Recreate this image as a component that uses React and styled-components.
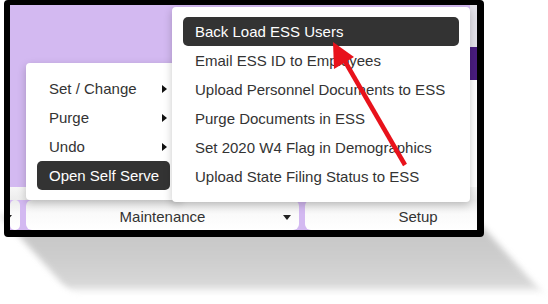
import React from "react";
import styled, { createGlobalStyle } from "styled-components";

const GlobalStyle = createGlobalStyle`
  html, body {
    margin: 0;
    background: #fff;
    font-family: "Liberation Sans", Arial, sans-serif;
  }
`;

const mainItems = [
  { label: "Set / Change", sub: true },
  { label: "Purge", sub: true },
  { label: "Undo", sub: true },
  { label: "Open Self Serve", active: true },
];

const essItems = [
  { label: "Back Load ESS Users", active: true },
  { label: "Email ESS ID to Employees" },
  { label: "Upload Personnel Documents to ESS" },
  { label: "Purge Documents in ESS" },
  { label: "Set 2020 W4 Flag in Demographics" },
  { label: "Upload State Filing Status to ESS" },
];

export default function App() {
  return (
    <>
      <GlobalStyle />
      <Scene>
        <Frame>
          <Workspace>
            <PurpleArea />
            <RightStrip>
              <StripPart $color="#e4e2ea" $h={42} />
              <StripPart $color="#4a1d80" $h={33} />
              <StripPart $color="#ffffff" />
            </RightStrip>
          </Workspace>
          <Band />
          <TabRow>
            <Tab>
              <Caret />
            </Tab>
            <Tab>
              Maintenance
              <Caret />
            </Tab>
            <Tab>Setup</Tab>
          </TabRow>

          <MainMenu>
            {mainItems.map((item) => (
              <MenuItem key={item.label} $active={item.active} $tight>
                <span>{item.label}</span>
                {item.sub && <SubArrow />}
              </MenuItem>
            ))}
          </MainMenu>

          <SubMenu>
            {essItems.map((item) => (
              <MenuItem key={item.label} $active={item.active}>
                {item.label}
              </MenuItem>
            ))}
          </SubMenu>
        </Frame>

        <Pointer viewBox="0 0 548 304" width="548" height="304">
          <line x1="405" y1="165" x2="343" y2="58" stroke="#e8121b" strokeWidth="4.5" />
          <polygon points="333,42 334,69 354,57" fill="#e8121b" />
        </Pointer>
      </Scene>
    </>
  );
}

const Scene = styled.div`
  position: relative;
  isolation: isolate;
  width: 548px;
  height: 304px;
  padding-left: 4px;
  box-sizing: border-box;
  overflow: hidden;
  background: #fff;
`;

const Frame = styled.div`
  position: relative;
  width: 480px;
  height: 237px;
  box-sizing: border-box;
  border-style: solid;
  border-color: #000;
  border-width: 5px 7px 7px 6px;
  border-radius: 4px;
  background: #d3b9f1;
  display: flex;
  flex-direction: column;

  &::before {
    content: "";
    position: absolute;
    left: -8px;
    top: 212px;
    width: 472px;
    height: 72px;
    background: linear-gradient(#c4c4c4, #cdcdcd 55%, #d9d9d9);
    transform: skewX(42deg);
    transform-origin: top left;
    filter: blur(4px);
    z-index: -1;
  }
`;

const Workspace = styled.div`
  display: flex;
  height: 182px;
`;

const PurpleArea = styled.div`
  flex: 1;
  background: #d3b9f1;
`;

const RightStrip = styled.div`
  width: 7px;
  display: flex;
  flex-direction: column;
`;

const StripPart = styled.div`
  background: ${(p) => p.$color};
  height: ${(p) => (p.$h ? `${p.$h}px` : "auto")};
  flex: ${(p) => (p.$h ? "none" : 1)};
`;

const Band = styled.div`
  height: 13px;
  background: linear-gradient(#f6f6f6, #ececec);
`;

const TabRow = styled.div`
  flex: 1;
  display: grid;
  grid-template-columns: 10px 273px 226px;
  gap: 6px;
  overflow: hidden;
  background: #d3b9f1;
`;

const Tab = styled.div`
  position: relative;
  display: flex;
  align-items: center;
  justify-content: center;
  border-radius: 6px;
  background: linear-gradient(#ebebeb, #fafafa 45%, #fff);
  font-size: 15px;
  color: #333;
  padding-top: 2px;
`;

const Caret = styled.span`
  position: absolute;
  right: 8px;
  top: 15px;
  width: 0;
  height: 0;
  border-left: 4px solid transparent;
  border-right: 4px solid transparent;
  border-top: 5px solid #222;
`;

const Menu = styled.div`
  position: absolute;
  background: #fff;
  border-radius: 4px;
  box-shadow: 0 3px 9px rgba(0, 0, 0, 0.22);
  display: flex;
  flex-direction: column;
`;

const MainMenu = styled(Menu)`
  left: 16px;
  top: 58px;
  width: 155px;
  box-sizing: border-box;
  padding: 11px 11px 10px;
  z-index: 1;
`;

const SubMenu = styled(Menu)`
  left: 162px;
  top: 2px;
  width: 298px;
  box-sizing: border-box;
  padding: 10px 11px 11px;
  z-index: 2;
`;

const MenuItem = styled.div`
  height: 29px;
  display: flex;
  align-items: center;
  justify-content: space-between;
  padding: ${(p) => (p.$tight ? "0 3px 0 12px" : "0 12px")};
  border-radius: 5px;
  font-size: 15px;
  color: ${(p) => (p.$active ? "#fff" : "#333")};
  background: ${(p) => (p.$active ? "#333" : "transparent")};
  white-space: nowrap;
`;

const SubArrow = styled.span`
  width: 0;
  height: 0;
  border-top: 4px solid transparent;
  border-bottom: 4px solid transparent;
  border-left: 5px solid #111;
`;

const Pointer = styled.svg`
  position: absolute;
  left: 0;
  top: 0;
  z-index: 5;
  pointer-events: none;
`;
